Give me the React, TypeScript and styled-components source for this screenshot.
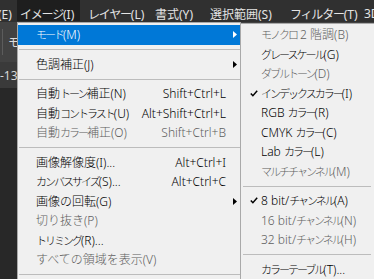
import styled, { createGlobalStyle } from "styled-components";

const GlobalStyle = createGlobalStyle`
  html, body {
    margin: 0;
    padding: 0;
    background: #282828;
  }
  body {
    overflow: hidden;
  }
`;

const uiFont = `"Noto Sans", "Noto Sans CJK JP", sans-serif`;

const Screen = styled.div`
  position: relative;
  width: 374px;
  height: 279px;
  overflow: hidden;
  background: #282828;
  font-family: ${uiFont};
`;

const MenuBar = styled.div`
  display: flex;
  align-items: flex-start;
  height: 22px;
  margin-left: -29px;
  background: #303030;
  color: #e4e4e4;
  font-size: 12px;
  white-space: nowrap;
`;

const BarItem = styled.div<{ $active?: boolean; $w: number }>`
  display: flex;
  align-items: center;
  flex-shrink: 0;
  width: ${(p) => p.$w}px;
  height: 21px;
  padding: 6px 0 0 3px;
  margin-right: 5px;
  box-sizing: border-box;
  background: ${(p) => (p.$active ? "#1e1e1e" : "transparent")};
`;

const OptionsBar = styled.div`
  display: flex;
  align-items: center;
  gap: 5px;
  height: 40px;
  padding-left: 2px;
  background: #424242;
  color: #dcdcdc;
  font-size: 12px;
`;

const Divider = styled.div`
  width: 1px;
  height: 26px;
  background: #5c5c5c;
`;

const TabStrip = styled.div`
  display: flex;
  align-items: center;
  height: 26px;
  background: #3a3a3a;
  color: #d8d8d8;
  font-size: 12px;
`;

const Workspace = styled.div`
  height: 200px;
  background: #282828;
`;

const Dropdown = styled.div`
  position: absolute;
  top: 22px;
  left: 17px;
  width: 224px;
  box-sizing: border-box;
  padding-top: 2px;
  background: #f0f0f0;
  border: 1px solid #a9a9a9;
  font-size: 12px;
  font-weight: 300;
  color: #000;
  white-space: nowrap;
  z-index: 2;
`;

const SubMenu = styled(Dropdown)`
  top: 23px;
  left: 240px;
  width: 136px;
  padding-top: 1px;
  z-index: 3;
`;

const Row = styled.div<{ $active?: boolean; $disabled?: boolean; $indent: number }>`
  position: relative;
  display: flex;
  align-items: center;
  height: 19.5px;
  line-height: 19.5px;
  padding-left: ${(p) => p.$indent}px;
  background: ${(p) => (p.$active ? "#0078d7" : "transparent")};
  color: ${(p) => (p.$active ? "#ffffff" : p.$disabled ? "#5e5e5e" : "#000000")};
`;

const Kana = styled.span<{ $bar?: boolean }>`
  font-size: ${(p) => (p.$bar ? 12 : 11)}px;
  letter-spacing: ${(p) => (p.$bar ? -1.2 : -2)}px;
`;

const Shortcut = styled.span`
  margin-left: auto;
  margin-right: 14px;
`;

const ArrowSlot = styled.span`
  position: absolute;
  right: 3px;
  top: 6px;
  display: flex;
`;

const CheckSlot = styled.span`
  position: absolute;
  left: 9px;
  top: 6px;
  display: flex;
`;

const Sep = styled.div<{ $left: number; $right: number }>`
  height: 1px;
  margin: 4.5px ${(p) => p.$right}px 4.5px ${(p) => p.$left}px;
  background: #bcbcbc;
`;

type Entry =
  | "sep"
  | {
      label: string;
      shortcut?: string;
      sub?: boolean;
      disabled?: boolean;
      active?: boolean;
      checked?: boolean;
    };

const imageMenu: Entry[] = [
  { label: "モード(M)", sub: true, active: true },
  "sep",
  { label: "色調補正(J)", sub: true },
  "sep",
  { label: "自動トーン補正(N)", shortcut: "Shift+Ctrl+L" },
  { label: "自動コントラスト(U)", shortcut: "Alt+Shift+Ctrl+L" },
  { label: "自動カラー補正(O)", shortcut: "Shift+Ctrl+B", disabled: true },
  "sep",
  { label: "画像解像度(I)...", shortcut: "Alt+Ctrl+I" },
  { label: "カンバスサイズ(S)...", shortcut: "Alt+Ctrl+C" },
  { label: "画像の回転(G)", sub: true },
  { label: "切り抜き(P)", disabled: true },
  { label: "トリミング(R)..." },
  { label: "すべての領域を表示(V)", disabled: true },
  "sep",
  { label: "複製(D)..." },
  { label: "画像操作(Y)..." },
];

const modeMenu: Entry[] = [
  { label: "モノクロ 2 階調(B)", disabled: true },
  { label: "グレースケール(G)" },
  { label: "ダブルトーン(D)", disabled: true },
  { label: "インデックスカラー(I)", checked: true },
  { label: "RGB カラー(R)" },
  { label: "CMYK カラー(C)" },
  { label: "Lab カラー(L)" },
  { label: "マルチチャンネル(M)", disabled: true },
  "sep",
  { label: "8 bit/チャンネル(A)", checked: true },
  { label: "16 bit/チャンネル(N)", disabled: true },
  { label: "32 bit/チャンネル(H)", disabled: true },
  "sep",
  { label: "カラーテーブル(T)..." },
];

const barItems = [
  { label: "編集(E)", w: 41 },
  { label: "イメージ(I)", w: 63, active: true },
  { label: "レイヤー(L)", w: 62 },
  { label: "書式(Y)", w: 50 },
  { label: "選択範囲(S)", w: 75 },
  { label: "フィルター(T)", w: 69 },
  { label: "3D", w: 30 },
];

// katakana runs are set narrower, like the proportional kana of the Windows UI font
const withKana = (label: string, bar?: boolean) =>
  label.split(/([\u30A0-\u30FF]+)/).map((part, i) =>
    /[\u30A0-\u30FF]/.test(part) ? (
      <Kana key={i} $bar={bar}>
        {part}
      </Kana>
    ) : (
      part
    )
  );

const Arrow = ({ color }: { color: string }) => (
  <svg width="4" height="7" viewBox="0 0 4 7">
    <polygon points="0,0 4,3.5 0,7" fill={color} />
  </svg>
);

const Check = () => (
  <svg width="8" height="7" viewBox="0 0 8 7">
    <polyline
      points="0.8,3.4 2.9,5.7 7.2,0.8"
      fill="none"
      stroke="#000"
      strokeWidth="1.5"
    />
  </svg>
);

export default function App() {
  return (
    <>
      <GlobalStyle />
      <Screen>
        <MenuBar>
          {barItems.map((b) => (
            <BarItem key={b.label} $w={b.w} $active={b.active}>
              <span>{withKana(b.label, true)}</span>
            </BarItem>
          ))}
        </MenuBar>
        <OptionsBar>
          <Divider />
          <span>モード:</span>
        </OptionsBar>
        <TabStrip>
          <span>-13</span>
        </TabStrip>
        <Workspace />

        <Dropdown>
          {imageMenu.map((e, i) =>
            e === "sep" ? (
              <Sep key={i} $left={1} $right={0} />
            ) : (
              <Row key={i} $indent={18} $active={e.active} $disabled={e.disabled}>
                <span>{withKana(e.label)}</span>
                {e.shortcut && <Shortcut>{e.shortcut}</Shortcut>}
                {e.sub && (
                  <ArrowSlot>
                    <Arrow color={e.active ? "#fff" : "#000"} />
                  </ArrowSlot>
                )}
              </Row>
            )
          )}
        </Dropdown>

        <SubMenu>
          {modeMenu.map((e, i) =>
            e === "sep" ? (
              <Sep key={i} $left={2} $right={4} />
            ) : (
              <Row key={i} $indent={20} $disabled={e.disabled}>
                {e.checked && (
                  <CheckSlot>
                    <Check />
                  </CheckSlot>
                )}
                <span>{withKana(e.label)}</span>
              </Row>
            )
          )}
        </SubMenu>
      </Screen>
    </>
  );
}
